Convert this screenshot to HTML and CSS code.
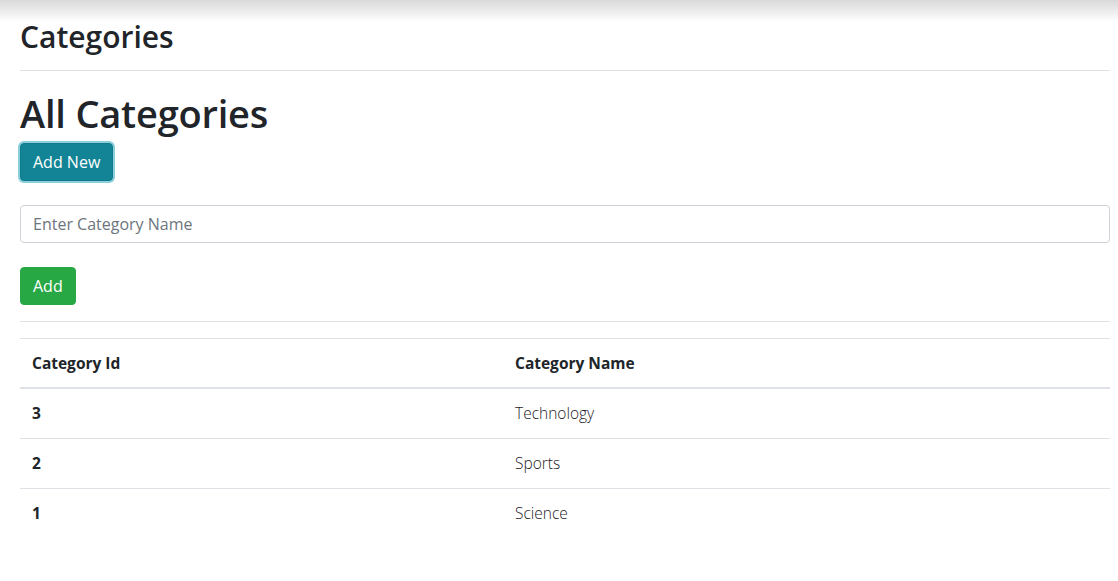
FILE: index.html
```html
<!DOCTYPE html>
<html lang="en">
<head>
<meta charset="utf-8">
<title>Categories</title>
<link rel="stylesheet" href="styles.css">
</head>
<body>
<div class="page">
  <header class="page-header">
    <h2 class="page-title">Categories</h2>
  </header>
  <h1 class="section-title">All Categories</h1>
  <button class="btn btn-info" type="button">Add New</button>
  <form class="add-form">
    <input class="form-control" type="text" placeholder="Enter Category Name">
    <button class="btn btn-success" type="button">Add</button>
  </form>
  <hr class="divider">
  <table class="table">
    <thead>
      <tr><th class="col-id">Category Id</th><th>Category Name</th></tr>
    </thead>
    <tbody>
      <tr><th>3</th><td>Technology</td></tr>
      <tr><th>2</th><td>Sports</td></tr>
      <tr><th>1</th><td>Science</td></tr>
    </tbody>
  </table>
</div>
</body>
</html>
```

FILE: styles.css
```css
* { box-sizing: border-box; }
html, body { margin: 0; padding: 0; }
body {
  font-family: "Open Sans", "Noto Sans", sans-serif;
  font-size: 16px;
  line-height: 1.5;
  color: #212529;
  background: #fff linear-gradient(#d9d9d9, #fff 22px) no-repeat;
}
.page {
  padding: 0 8px 40px 20px;
}
.page-header {
  padding: 18px 0 14px;
  border-bottom: 1px solid #dee2e6;
}
.page-title {
  margin: 0;
  font-size: 30px;
  font-weight: 600;
  line-height: 38px;
}
.section-title {
  margin: 18px 0 6px;
  font-size: 38px;
  font-weight: 600;
  line-height: 48px;
  letter-spacing: -0.2px;
}
.btn {
  display: inline-block;
  font-family: inherit;
  font-size: 16px;
  line-height: 24px;
  padding: 6px 12px;
  border: 1px solid transparent;
  border-radius: 4px;
  color: #fff;
  cursor: pointer;
}
.btn-info {
  background: #138496;
  border-color: #117a8b;
  box-shadow: 0 0 0 2px rgba(58, 176, 195, 0.6);
}
.btn-success {
  background: #28a745;
  border-color: #28a745;
}
.add-form {
  margin-top: 24px;
  display: flex;
  flex-direction: column;
  align-items: flex-start;
  gap: 24px;
}
.form-control {
  width: 100%;
  height: 38px;
  padding: 6px 12px;
  font-family: inherit;
  font-size: 16px;
  line-height: 24px;
  color: #495057;
  border: 1px solid #ced4da;
  border-radius: 4px;
  background: #fff;
}
.form-control::placeholder { color: #6c757d; }
.divider {
  margin: 16px 0;
  border: 0;
  border-top: 1px solid #e3e3e3;
}
.table {
  width: 100%;
  border-collapse: collapse;
}
.table th, .table td {
  padding: 12px;
  line-height: 25px;
  text-align: left;
  border-top: 1px solid #dee2e6;
  vertical-align: top;
}
.table thead th {
  border-bottom: 2px solid #dee2e6;
  padding-bottom: 11px;
}
.table th { font-weight: 700; font-size: 15.5px; }
.table td { font-weight: 300; font-size: 15.5px; color: #1e2125; }
.col-id { width: 483px; }
```
